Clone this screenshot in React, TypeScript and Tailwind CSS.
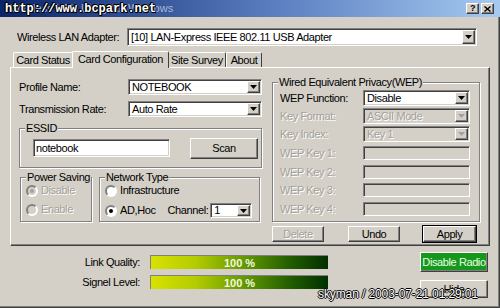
import React from 'react'

const sunken =
  'border border-t-[#808080] border-l-[#808080] border-b-white border-r-white shadow-[inset_1px_1px_0_#404040,inset_-1px_-1px_0_#d4d0c8]'
const raised =
  'border border-t-white border-l-white border-b-[#404040] border-r-[#404040] shadow-[inset_-1px_-1px_0_#808080]'
const grey = 'text-[#a4a09a] [text-shadow:1px_1px_0_#ffffff]'

function Arrow({ disabled }: { disabled?: boolean }) {
  return (
    <div className={`w-[13px] h-full shrink-0 bg-[#d4d0c8] ${raised} flex items-center justify-center`}>
      <svg width="7" height="4" viewBox="0 0 7 4">
        <path d="M0 0h7L3.5 4z" fill={disabled ? '#a0a0a0' : '#000'} />
      </svg>
    </div>
  )
}

function Select({ value, className = '', disabled }: { value: string; className?: string; disabled?: boolean }) {
  return (
    <div className={`flex p-[1px] ${sunken} ${disabled ? 'bg-[#d4d0c8]' : 'bg-white'} ${className}`}>
      <div className={`flex-1 flex items-center pl-[2px] overflow-hidden ${disabled ? grey : ''}`}>{value}</div>
      <Arrow disabled={disabled} />
    </div>
  )
}

function Input({ value = '', className = '', disabled }: { value?: string; className?: string; disabled?: boolean }) {
  return (
    <div className={`flex items-center pl-[2px] ${sunken} ${disabled ? 'bg-[#d4d0c8]' : 'bg-white'} ${className}`}>
      {value}
    </div>
  )
}

function Button({ children, className = '', disabled }: { children: React.ReactNode; className?: string; disabled?: boolean }) {
  return (
    <div className={`flex items-center justify-center bg-[#d4d0c8] ${raised} ${disabled ? grey : ''} ${className}`}>
      {children}
    </div>
  )
}

function Group({ label, className = '', children }: { label: string; className?: string; children?: React.ReactNode }) {
  return (
    <div className={`relative border border-[#808080] shadow-[inset_1px_1px_0_#ffffff,1px_1px_0_#ffffff] ${className}`}>
      <span className="absolute -top-[7px] left-[5px] bg-[#d4d0c8] px-[1px] leading-[13px]">{label}</span>
      {children}
    </div>
  )
}

function Radio({ label, checked, disabled }: { label: string; checked?: boolean; disabled?: boolean }) {
  return (
    <div className="flex items-center gap-[3px] h-[13px]">
      <span
        className={`w-[12px] h-[12px] rounded-full border-2 border-t-[#808080] border-l-[#808080] border-b-white border-r-white flex items-center justify-center ${
          disabled ? 'bg-[#d4d0c8]' : 'bg-white'
        }`}
      >
        {checked && <span className={`w-[4px] h-[4px] rounded-full ${disabled ? 'bg-[#a0a0a0]' : 'bg-black'}`} />}
      </span>
      <span className={disabled ? grey : ''}>{label}</span>
    </div>
  )
}

function Tab({ children, active, className = '' }: { children: React.ReactNode; active?: boolean; className?: string }) {
  if (active)
    return (
      <div
        className={`relative z-10 h-[17px] -mb-[1px] bg-[#d4d0c8] border-t border-l border-r border-t-white border-l-white border-r-[#404040] rounded-t-[2px] flex justify-center items-start pt-[1px] ${className}`}
      >
        {children}
      </div>
    )
  return (
    <div
      className={`h-[15px] border-t border-l border-r border-t-white border-l-white border-r-[#404040] rounded-t-[2px] flex justify-center items-center ${className}`}
    >
      {children}
    </div>
  )
}

function Meter({ label }: { label: string }) {
  return (
    <div className="flex items-center h-[14px]">
      <span className="w-[140px] text-right pr-[10px]">{label}</span>
      <div className="w-[178px] h-[14px] border-t border-l border-t-[#808080] border-l-[#808080] bg-[linear-gradient(to_right,#d8e200,#b4cc00_25%,#5c9400_55%,#1f5a00_80%,#013000)] flex items-center justify-center">
        <span className="font-bold text-[11px] tracking-normal text-[#f4f8e0] leading-[12px]">100 %</span>
      </div>
    </div>
  )
}

export default function App() {
  return (
    <div className="w-[500px] h-[308px] relative overflow-hidden whitespace-nowrap bg-[#d4d0c8] text-black text-[11px] tracking-[-0.4px] leading-[13px] font-['Liberation_Sans',Arial,sans-serif] shadow-[inset_-1px_-1px_0_#404040,inset_-2px_-2px_0_#808080]">
      {/* title bar */}
      <div className="relative h-[17px] bg-[linear-gradient(to_right,#0a246a,#5a7ec0_55%,#a6caf0)] flex items-center">
        <span className="ml-[10px] text-[11px] tracking-[0.1px] text-[#aab6d4]">Wireless LAN Utility for Windows</span>
        <div className="ml-auto mr-[6px] flex gap-[2px]">
          <div className={`w-[13px] h-[11px] bg-[#d4d0c8] ${raised} flex items-center justify-center font-bold text-[9px] leading-none`}>
            ?
          </div>
          <div className={`w-[13px] h-[11px] bg-[#d4d0c8] ${raised} flex items-center justify-center`}>
            <svg width="7" height="6" viewBox="0 0 7 6">
              <path d="M0.5 0.5l6 5M6.5 0.5l-6 5" stroke="#000" strokeWidth="1.4" />
            </svg>
          </div>
        </div>
        <span className="absolute left-[5px] top-[2px] font-['Liberation_Mono','DejaVu_Sans_Mono',monospace] font-bold text-[12px] tracking-normal leading-[14px] text-white [text-shadow:1px_0_0_#000,-1px_0_0_#000,0_1px_0_#000,0_-1px_0_#000,1px_1px_0_#000,-1px_-1px_0_#000]">
          http://www.bcpark.net
        </span>
      </div>

      {/* adapter row */}
      <div className="flex items-center mt-[11px] pl-[17px] h-[18px]">
        <span className="w-[110px]">Wireless LAN Adapter:</span>
        <Select value="[10] LAN-Express IEEE 802.11 USB Adapter" className="w-[350px] h-[18px]" />
      </div>

      {/* tabs */}
      <div className="mx-[10px] mt-[5px]">
        <div className="flex items-end h-[16px] pl-[3px]">
          <Tab className="w-[60px]">Card Status</Tab>
          <Tab active className="w-[97px] -ml-[1px]">
            Card Configuration
          </Tab>
          <Tab className="w-[58px] -ml-[1px]">Site Survey</Tab>
          <Tab className="w-[36px]">About</Tab>
        </div>
        <div className="h-[179px] border border-t-white border-l-white border-b-[#404040] border-r-[#404040] shadow-[inset_-1px_-1px_0_#808080] flex pl-[8px]">
          {/* left column */}
          <div className="w-[243px] flex flex-col pt-[11px]">
            <div className="flex items-center h-[16px]">
              <span className="w-[109px]">Profile Name:</span>
              <Select value="NOTEBOOK" className="w-[134px] h-[16px]" />
            </div>
            <div className="flex items-center h-[16px] mt-[6px]">
              <span className="w-[109px]">Transmission Rate:</span>
              <Select value="Auto Rate" className="w-[134px] h-[16px]" />
            </div>
            <Group label="ESSID" className="mt-[11px] h-[40px] flex items-center pl-[13px]">
              <Input value="notebook" className="w-[137px] h-[18px]" />
              <Button className="ml-[20px] w-[68px] h-[21px]">Scan</Button>
            </Group>
            <div className="flex mt-[9px]">
              <Group label="Power Saving" className="ml-[1px] w-[72px] h-[45px] flex flex-col pl-[5px] pt-[6px] gap-[6px]">
                <Radio label="Disable" checked disabled />
                <Radio label="Enable" disabled />
              </Group>
              <Group label="Network Type" className="ml-[7px] w-[161px] h-[45px] flex flex-col pl-[5px] pt-[6px] gap-[6px]">
                <Radio label="Infrastructure" />
                <div className="flex items-center">
                  <Radio label="AD,Hoc" checked />
                  <span className="ml-[12px]">Channel:</span>
                  <Select value="1" className="ml-[2px] w-[42px] h-[15px]" />
                </div>
              </Group>
            </div>
          </div>

          {/* right column */}
          <div className="ml-[10px] w-[208px] flex flex-col pt-[14px]">
            <Group label="Wired Equivalent Privacy(WEP)" className="h-[140px] flex flex-col pl-[7px] pt-[7px]">
              <div className="flex items-center h-[16px]">
                <span className="w-[83px]">WEP Function:</span>
                <Select value="Disable" className="w-[107px] h-[16px]" />
              </div>
              <div className="flex items-center h-[16px] mt-[2px]">
                <span className={`w-[83px] ${grey}`}>Key Format:</span>
                <Select value="ASCII Mode" disabled className="w-[107px] h-[16px]" />
              </div>
              <div className="flex items-center h-[16px] mt-[2px]">
                <span className={`w-[83px] ${grey}`}>Key Index:</span>
                <Select value="Key 1" disabled className="w-[107px] h-[16px]" />
              </div>
              <div className="flex items-center h-[14px] mt-[4px]">
                <span className={`w-[83px] ${grey}`}>WEP Key 1:</span>
                <Input disabled className="w-[107px] h-[14px]" />
              </div>
              <div className="flex items-center h-[14px] mt-[5px]">
                <span className={`w-[83px] ${grey}`}>WEP Key 2:</span>
                <Input disabled className="w-[107px] h-[14px]" />
              </div>
              <div className="flex items-center h-[14px] mt-[4px]">
                <span className={`w-[83px] ${grey}`}>WEP Key 3:</span>
                <Input disabled className="w-[107px] h-[14px]" />
              </div>
              <div className="flex items-center h-[14px] mt-[5px]">
                <span className={`w-[83px] ${grey}`}>WEP Key 4:</span>
                <Input disabled className="w-[107px] h-[14px]" />
              </div>
            </Group>
            <div className="flex mt-[4px]">
              <Button disabled className="w-[52px] h-[16px]">
                Delete
              </Button>
              <Button className="ml-[24px] w-[52px] h-[16px]">Undo</Button>
              <Button className="ml-[23px] w-[53px] h-[16px] outline outline-1 outline-black">Apply</Button>
            </div>
          </div>
        </div>
      </div>

      {/* bottom */}
      <div className="flex ml-[10px] mt-[6px]">
        <div className="flex flex-col pt-[3px] gap-[6px]">
          <Meter label="Link Quality:" />
          <Meter label="Signel Level:" />
        </div>
        <div className="ml-auto mr-[12px] flex flex-col gap-[8px]">
          <Button className="w-[68px] h-[20px] !bg-[#17981c] text-[#e8ffe8]">Disable Radio</Button>
          <Button className="w-[68px] h-[18px]">Hide</Button>
        </div>
      </div>

      <span className="absolute left-[318px] top-[287px] text-[12px] tracking-[-0.1px] leading-[14px] text-white [text-shadow:1px_0_0_#000,-1px_0_0_#000,0_1px_0_#000,0_-1px_0_#000]">
        skyman / 2003-07-21 01:29:01
      </span>
    </div>
  )
}
